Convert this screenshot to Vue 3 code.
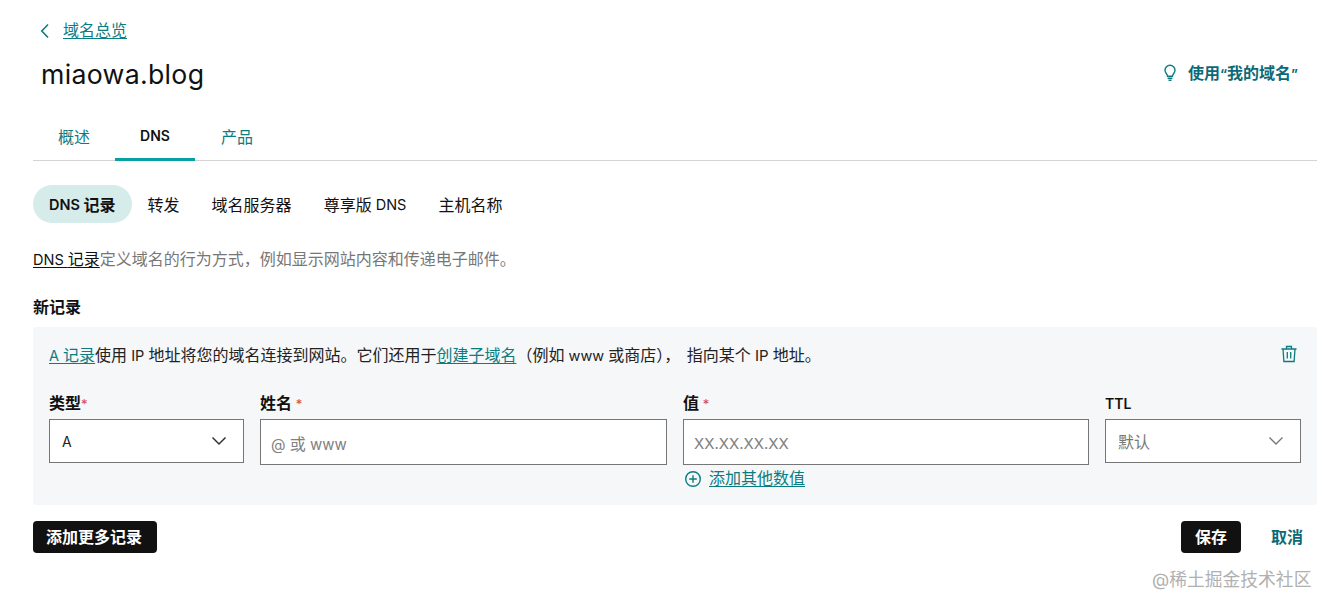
<script setup>
</script>

<template>
  <div class="page">
    <header class="head">
      <div class="head-left">
        <a class="back">
          <svg width="12" height="16" viewBox="0 0 12 16" fill="none"><path d="M9 1.500 2.800 8 9 14.500" stroke="#0c7c80" stroke-width="1.600"/></svg>
          <span class="link">域名总览</span>
        </a>
        <h1 class="title">miaowa.blog</h1>
      </div>
      <a class="use-mine">
        <svg width="16" height="18" viewBox="0 0 16 18" fill="none" stroke="#0c7c80" stroke-width="1.400">
          <path d="M5.600 12.200c0-1.800-2.600-2.900-2.600-6A5 5 0 0 1 13 6.200c0 3.100-2.600 4.200-2.600 6z"/>
          <path d="M5.600 14.200h4.800M6.500 16.200h3"/>
        </svg>
        <span>使用<span class="q">“</span>我的域名<span class="q">”</span></span>
      </a>
    </header>

    <nav class="tabs">
      <a class="tab">概述</a>
      <a class="tab active">DNS</a>
      <a class="tab last">产品</a>
    </nav>

    <div class="subtabs">
      <a class="subtab on"><span class="lat">DNS </span>记录</a>
      <a class="subtab">转发</a>
      <a class="subtab">域名服务器</a>
      <a class="subtab">尊享版<span class="lat"> DNS</span></a>
      <a class="subtab">主机名称</a>
    </div>

    <p class="desc"><a class="dark-link"><span class="lat">DNS </span>记录</a>定义域名的行为方式，例如显示网站内容和传递电子邮件。</p>

    <h2 class="new">新记录</h2>

    <section class="panel">
      <div class="info">
        <p><a class="link"><span class="lat">A </span>记录</a>使用<span class="lat"> IP </span>地址将您的域名连接到网站。它们还用于<a class="link">创建子域名</a>（例如<span class="lat"> www </span>或商店）， <span class="tail">指向某个<span class="lat"> IP </span>地址。</span></p>
        <svg class="trash" width="18" height="18" viewBox="0 0 18 18" fill="none" stroke="#0c7c80" stroke-width="1.300">
          <path d="M1.500 4h15M6.500 3.800V1.500h5v2.300M3 4l.9 12.500h10.200L15 4M7.300 7v6.500M10.700 7v6.500"/>
        </svg>
      </div>

      <div class="fields">
        <div class="field">
          <label>类型<i class="tight">*</i></label>
          <div class="box select">
            <span class="val">A</span>
            <svg width="16" height="10" viewBox="0 0 16 10" fill="none"><path d="M1.500 1.500 8 8l6.500-6.500" stroke="#333" stroke-width="1.500"/></svg>
          </div>
        </div>
        <div class="field">
          <label>姓名 <i>*</i></label>
          <div class="box input">@ <span class="zh">或</span> www</div>
        </div>
        <div class="field">
          <label>值 <i>*</i></label>
          <div class="box input">XX.XX.XX.XX</div>
          <a class="add">
            <svg width="18" height="18" viewBox="0 0 18 18" fill="none" stroke="#0c7c80" stroke-width="1.400">
              <circle cx="9" cy="9" r="7.300"/>
              <path d="M9 5.200v7.600M5.200 9h7.600"/>
            </svg>
            <span class="link">添加其他数值</span>
          </a>
        </div>
        <div class="field">
          <label class="ttl">TTL</label>
          <div class="box select">
            <span class="placeholder">默认</span>
            <svg width="16" height="10" viewBox="0 0 16 10" fill="none"><path d="M1.500 1.500 8 8l6.500-6.500" stroke="#777" stroke-width="1.400"/></svg>
          </div>
        </div>
      </div>
    </section>

    <footer class="actions">
      <button class="btn">添加更多记录</button>
      <div class="right">
        <button class="btn save">保存</button>
        <a class="cancel">取消</a>
      </div>
    </footer>

    <div class="mark">@稀土掘金技术社区</div>
  </div>
</template>

<style>
html, body { background: #fff; }
</style>

<style scoped>
.page {
  position: relative;
  box-sizing: border-box;
  width: 1331px;
  height: 608px;
  overflow: hidden;
  padding: 18px 14px 0 33px;
  color: #111;
  font-family: "Inter", "Noto Sans CJK SC", sans-serif;
  font-size: 16px;
}
a { cursor: pointer; }
p, h1, h2 { margin: 0; }
.lat { font-size: 14.500px; }
.q { font-size: 13px; }
.link { color: #0c7c80; text-decoration: underline; text-underline-offset: 2px; }
.head { display: flex; justify-content: space-between; }
.head-left { display: flex; flex-direction: column; }
.back { display: flex; align-items: center; gap: 12px; height: 22px; padding-left: 6px; font-size: 16px; }
.back svg { margin-top: 3px; }
.title { margin: 17px 0 0 8px; font-size: 26.700px; line-height: 34px; font-weight: 400; letter-spacing: .3px; }
.use-mine {
  display: flex; align-items: center; gap: 10px;
  height: 24px; margin: 42px 19px 0 0;
  color: #0c6a78; font-size: 16px; font-weight: 700;
}
.use-mine svg { margin-top: 1px; }
.tabs { display: flex; margin-top: 24px; height: 45px; border-bottom: 1px solid #d4d4d4; }
.tab {
  box-sizing: border-box; width: 82px; height: 46px;
  display: flex; align-items: center; justify-content: center;
  color: #0c7c80; font-size: 16px; padding-bottom: 4px;
}
.tab.last { margin-left: 1px; }
.tab.active { width: 80px; color: #111; font-weight: 600; font-size: 14px; border-bottom: 3px solid #09a0a4; padding-bottom: 2px; }
.subtabs { display: flex; margin-top: 24px; }
.subtab {
  display: flex; align-items: center; white-space: pre; height: 38px; padding: 0 16px;
  font-size: 16px; color: #111;
}
.subtab.on { background: #d6ecea; border-radius: 19px; font-weight: 600; }
.desc { margin-top: 25px; height: 22px; line-height: 22px; color: #777; font-size: 16px; }
.dark-link { color: #111; text-decoration: underline; text-underline-offset: 2px; }
.new { margin-top: 25px; height: 24px; line-height: 24px; font-size: 16px; font-weight: 700; }
.panel { box-sizing: border-box; height: 178px; margin-top: 8px; padding: 15px 16px 0; background: #f5f7f8; border-radius: 3px; }
.info { display: flex; justify-content: space-between; align-items: center; height: 24px; color: #222; font-size: 16px; }
.tail { margin-left: 2px; }
.tail .lat { font-size: 15px; }
.trash { margin-right: 3px; }
.fields { display: grid; grid-template-columns: 195px 407px 406px 196px; gap: 16px; margin-top: 25px; }
.field { display: flex; flex-direction: column; }
label { height: 28px; line-height: 24px; font-size: 16px; font-weight: 700; color: #111; }
label.ttl { line-height: 26px; font-size: 14px; font-weight: 600; }
label i { color: #d8473f; font-style: normal; font-weight: 400; font-size: 13px; }
.box { box-sizing: border-box; background: #fff; border: 1px solid #767676; }
.select { height: 44px; display: flex; align-items: center; justify-content: space-between; padding: 0 16px 0 12px; }
.input { height: 46px; line-height: 48px; padding-left: 10px; color: #808080; font-size: 15px; }
.zh { font-size: 16px; }
.val { font-size: 14px; color: #222; padding-top: 1px; }
.placeholder { font-size: 16px; color: #777; }
.add { display: flex; align-items: center; gap: 7px; margin-top: 1px; padding-left: 1px; height: 22px; font-size: 16px; }
.add svg { margin-top: 3px; }
.actions { display: flex; justify-content: space-between; align-items: center; margin-top: 16px; }
.right { display: flex; align-items: center; gap: 30px; margin-right: 14px; }
.btn {
  height: 32px; padding: 0 15px 2px 13px; border: 0; border-radius: 4px;
  background: #111; color: #fff; font: 700 16px "Inter", "Noto Sans CJK SC", sans-serif;
}
.save { width: 60px; padding: 0 0 2px; }
.cancel { color: #0c6a78; font-weight: 700; font-size: 16px; margin-bottom: 2px; }
.mark { position: absolute; left: 1152px; top: 567px; color: #b0b0b0; font-size: 17.800px; line-height: 26px; white-space: nowrap; }
</style>
